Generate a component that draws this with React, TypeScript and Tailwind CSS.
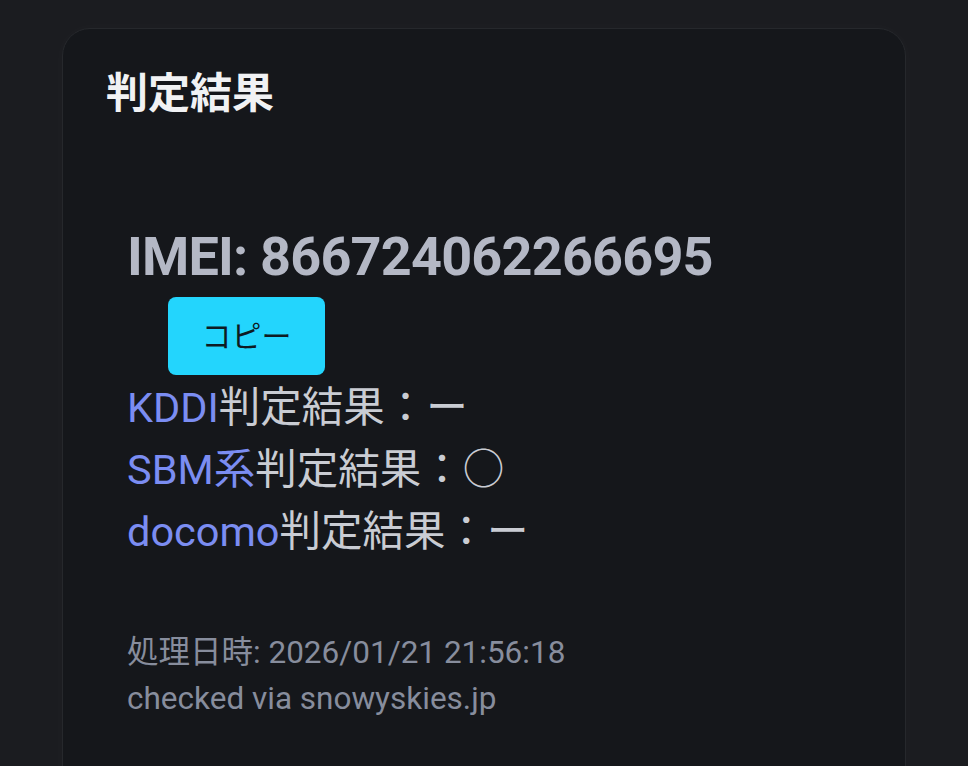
import React from "react";

const font = { fontFamily: 'Roboto, "Noto Sans CJK JP", sans-serif' };

export default function App() {
  return (
    <div
      className="h-[766px] w-full overflow-hidden bg-[#1b1c20] px-[62px] pt-[28px]"
      style={font}
    >
      <div className="min-h-[800px] rounded-t-[28px] border border-[#26282c] bg-[#15171b] pl-[43px] pt-[40px] shadow-[0_0_18px_rgba(255,255,255,0.025)]">
        <h2
          className="text-[42px] font-bold leading-none text-[#f1f2f4]"
          style={{ fontFamily: '"Noto Sans CJK JP", sans-serif' }}
        >
          判定結果
        </h2>
        <div className="mt-[114px] pl-[21px]">
          <div className="text-[54px] font-bold leading-[64px] tracking-[-0.8px] text-[#b4b8c5]">
            IMEI: 866724062266695
          </div>
          <button className="ml-[41px] mt-[8px] flex h-[78px] w-[157px] items-center justify-center rounded-[8px] bg-[#23d5fd] text-[30px] text-[#0e1a22]">
            コピー
          </button>
          <div className="mt-[2px] text-[41.5px] leading-[62px] text-[#c9ccd3]">
            <div>
              <span className="text-[#7b8df2]">KDDI</span>判定結果：ー
            </div>
            <div>
              <span className="text-[#7b8df2]">SBM系</span>判定結果：○
            </div>
            <div>
              <span className="text-[#7b8df2]">docomo</span>判定結果：ー
            </div>
          </div>
          <div className="mt-[67px] text-[31.5px] leading-[46px] text-[#878d9d]">
            <div>処理日時: 2026/01/21 21:56:18</div>
            <div>checked via snowyskies.jp</div>
          </div>
        </div>
      </div>
    </div>
  );
}
